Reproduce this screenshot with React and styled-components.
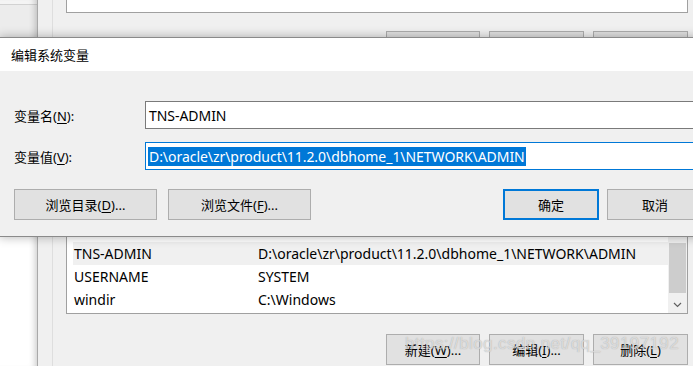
import styled, { createGlobalStyle } from 'styled-components';

const GlobalStyle = createGlobalStyle`
  html, body {
    margin: 0;
    padding: 0;
  }
  body {
    width: 693px;
    height: 366px;
    overflow: hidden;
    font-family: "Noto Sans", "Noto Sans CJK SC", sans-serif;
    font-size: 13px;
    color: #000;
  }
  * {
    box-sizing: border-box;
  }
`;

const Screen = styled.div`
  position: relative;
  width: 693px;
  height: 366px;
  overflow: hidden;
  display: flex;
  background: #f0f0f0;
`;

const SideStrip = styled.div`
  width: 38px;
  flex-shrink: 0;
  border-right: 1px solid #a9a9a9;
  background: linear-gradient(to bottom, #f4f4f4 0 4px, #d2d2d2 4px 5px, #ececec 5px 37px, #fff 37px);
  box-shadow: inset -7px 0 6px -5px rgba(0, 0, 0, 0.2);
`;

const Panel = styled.div`
  flex: 1;
  padding-left: 14px;
  display: flex;
`;

const PanelInner = styled.div`
  flex: 1;
  border-left: 1px solid #dedede;
  padding: 0 5px 0 13px;
  display: flex;
  flex-direction: column;
`;

const TopList = styled.div`
  height: 13px;
  background: #fff;
  border: 1px solid #a0a0a0;
  border-top: none;
`;

const ButtonRow = styled.div`
  display: flex;
  justify-content: flex-end;
  gap: 9px;
  margin-top: ${p => p.top || 0}px;
`;

const Button = styled.div`
  width: ${p => p.w || 95}px;
  height: ${p => p.h || 31}px;
  flex-shrink: 0;
  display: flex;
  align-items: center;
  justify-content: center;
  background: #e1e1e1;
  border: ${p => (p.primary ? '2px solid #0078d7' : '1px solid #adadad')};
  font-size: 13px;
  white-space: nowrap;
  u {
    text-decoration: underline;
    text-underline-offset: 2px;
  }
`;

const ListBox = styled.div`
  margin-top: 18px;
  height: 234px;
  background: #fff;
  border: 1px solid #a0a0a0;
  display: flex;
`;

const Rows = styled.div`
  flex: 1;
  overflow: hidden;
  padding-left: 6px;
`;

const Row = styled.div`
  height: 23px;
  display: grid;
  grid-template-columns: 184px 1fr;
  align-items: center;
  padding-left: 1px;
  white-space: nowrap;
  font-size: 14px;
  background: ${p => (p.hot ? '#f0f0f0' : 'transparent')};
`;

const Scrollbar = styled.div`
  width: 19px;
  background: #f0f0f0;
  display: flex;
  flex-direction: column;
`;

const Track = styled.div`
  flex: 1;
`;

const Thumb = styled.div`
  height: 50px;
  margin: 0 1px 3px;
  background: #cdcdcd;
`;

const Arrow = styled.div`
  height: 17px;
  display: flex;
  align-items: center;
  justify-content: center;
`;

const Dialog = styled.div`
  position: absolute;
  top: 37px;
  left: -1px;
  width: 710px;
  height: 200px;
  border: 1px solid #8a8a8a;
  box-shadow: 0 0 10px rgba(0, 0, 0, 0.3);
  display: flex;
  flex-direction: column;
`;

const TitleBar = styled.div`
  height: 33px;
  background: #fff;
  display: flex;
  align-items: center;
  padding-left: 11px;
  font-size: 13px;
`;

const Body = styled.div`
  flex: 1;
  background: #f0f0f0;
  padding: 30px 5px 0 14px;
`;

const Fields = styled.div`
  display: grid;
  grid-template-columns: 131px 1fr;
  row-gap: 13px;
  align-items: center;
`;

const Label = styled.div`
  font-size: 13px;
  u {
    text-underline-offset: 2px;
  }
`;

const Input = styled.div`
  height: 28px;
  background: #fff;
  border: 1px solid ${p => (p.focused ? '#0078d7' : '#7a7a7a')};
  display: flex;
  align-items: center;
  padding-left: ${p => (p.focused ? 2 : 3)}px;
  white-space: nowrap;
  font-size: 14px;
  letter-spacing: -0.05px;
`;

const Selection = styled.span`
  background: #0078d7;
  color: #fff;
  padding: 0 1px;
  line-height: 19px;
`;

const DialogButtons = styled.div`
  display: flex;
  gap: 11px;
  margin-top: 19px;
`;

const Spacer = styled.div`
  flex: 1;
`;

const RightButtons = styled.div`
  display: flex;
  gap: 8px;
`;

const Watermark = styled.div`
  position: absolute;
  left: 405px;
  top: 334px;
  font-family: "Liberation Sans", Arial, sans-serif;
  font-size: 17px;
  letter-spacing: 0.4px;
  color: rgba(238, 238, 238, 0.7);
  text-shadow: 0 0 1px rgba(120, 120, 120, 0.6);
  pointer-events: none;
  white-space: nowrap;
`;

const VALUE = 'D:\\oracle\\zr\\product\\11.2.0\\dbhome_1\\NETWORK\\ADMIN';

const vars = [
  ['ComSpec', 'C:\\Windows\\system32\\cmd.exe'],
  ['NUMBER_OF_PROCESSORS', '4'],
  ['OS', 'Windows_NT'],
  ['Path', 'C:\\Windows\\system32;C:\\Windows'],
  ['PATHEXT', '.COM;.EXE;.BAT;.CMD;.VBS'],
  ['PROCESSOR_ARCHITECTURE', 'AMD64'],
  ['TEMP', 'C:\\Windows\\TEMP'],
  ['TNS-ADMIN', VALUE],
  ['USERNAME', 'SYSTEM'],
  ['windir', 'C:\\Windows'],
];

export default function App() {
  return (
    <Screen>
      <GlobalStyle />
      <SideStrip />
      <Panel>
        <PanelInner>
          <TopList />
          <ButtonRow top={18}>
            <Button w={94}>新建(<u>N</u>)...</Button>
            <Button>编辑(<u>E</u>)...</Button>
            <Button>删除(<u>D</u>)</Button>
          </ButtonRow>
          <ListBox>
            <Rows>
              {vars.map(([name, value]) => (
                <Row key={name} hot={name === 'TNS-ADMIN'}>
                  <span>{name}</span>
                  <span>{value}</span>
                </Row>
              ))}
            </Rows>
            <Scrollbar>
              <Track />
              <Thumb />
              <Arrow>
                <svg width="9" height="6" viewBox="0 0 9 6">
                  <polyline points="1,1 4.5,4.5 8,1" fill="none" stroke="#606060" strokeWidth="1.2" />
                </svg>
              </Arrow>
            </Scrollbar>
          </ListBox>
          <ButtonRow top={20}>
            <Button w={94}>新建(<u>W</u>)...</Button>
            <Button>编辑(<u>I</u>)...</Button>
            <Button>删除(<u>L</u>)</Button>
          </ButtonRow>
        </PanelInner>
      </Panel>

      <Dialog>
        <TitleBar>编辑系统变量</TitleBar>
        <Body>
          <Fields>
            <Label>变量名(<u>N</u>):</Label>
            <Input>TNS-ADMIN</Input>
            <Label>变量值(<u>V</u>):</Label>
            <Input focused>
              <Selection>{VALUE}</Selection>
            </Input>
          </Fields>
          <DialogButtons>
            <Button w={143} h={31}>浏览目录(<u>D</u>)...</Button>
            <Button w={143} h={31}>浏览文件(<u>F</u>)...</Button>
            <Spacer />
            <RightButtons>
              <Button w={96} h={31} primary>确定</Button>
              <Button w={96} h={31}>取消</Button>
            </RightButtons>
          </DialogButtons>
        </Body>
      </Dialog>

      <Watermark>https://blog.csdn.net/qq_39197192</Watermark>
    </Screen>
  );
}
